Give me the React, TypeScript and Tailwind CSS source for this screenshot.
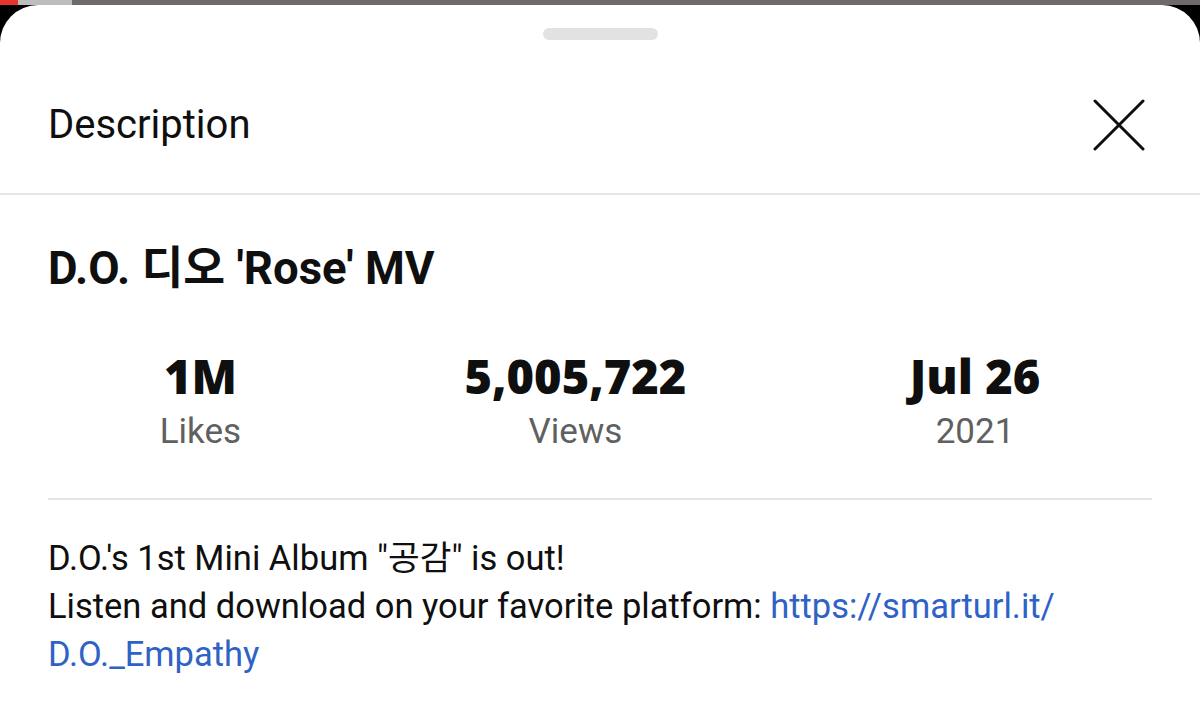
import React from "react";

function Stat({ value, label }: { value: string; label: string }) {
  return (
    <div className="flex flex-col items-center">
      <div className="font-['Open_Sans',sans-serif] font-extrabold text-[47px] leading-[56px] text-[#0f0f0f]">
        {value}
      </div>
      <div className="mt-[8px] font-['Roboto',sans-serif] text-[35px] leading-[40px] text-[#606060]">
        {label}
      </div>
    </div>
  );
}

export default function App() {
  return (
    <div className="w-[1200px] h-[709px] bg-black flex flex-col overflow-hidden font-['Roboto','Noto_Sans_CJK_KR',sans-serif]">
      <div className="h-[5px] flex shrink-0">
        <div className="w-[18px] bg-[#e8342a]" />
        <div className="w-[54px] bg-[#bdbdbd]" />
        <div className="flex-1 bg-[#6f6a6a]" />
      </div>
      <div className="flex-1 bg-white rounded-t-[38px] flex flex-col">
        <div className="flex justify-center pt-[23px]">
          <div className="w-[115px] h-[12px] rounded-full bg-[#e2e2e2]" />
        </div>
        <div className="flex items-center justify-between pl-[48px] pr-[55px] h-[155px] pt-[16px] border-b-2 border-[#e6e6e6]">
          <div className="text-[40px] text-[#0f0f0f] font-['Roboto','Noto_Sans_CJK_KR',sans-serif]">
            Description
          </div>
          <svg width="52" height="52" viewBox="0 0 52 52">
            <path d="M2 2 L50 50 M50 2 L2 50" stroke="#0f0f0f" strokeWidth="3" strokeLinecap="round" />
          </svg>
        </div>
        <div className="px-[48px]">
          <div className="pt-[46px] text-[45.5px] leading-[56px] font-bold text-[#0f0f0f] font-['Roboto','Noto_Sans_CJK_KR',sans-serif]">
            D.O. 디오 'Rose' MV
          </div>
          <div className="flex justify-around pt-[51px] pb-[46px] border-b-2 border-[#e6e6e6]">
            <Stat value="1M" label="Likes" />
            <Stat value="5,005,722" label="Views" />
            <Stat value="Jul 26" label="2021" />
          </div>
          <div className="pt-[34px] text-[34.5px] leading-[48px] text-[#0f0f0f] font-['Roboto','Noto_Sans_CJK_KR',sans-serif]">
            D.O.'s 1st Mini Album "공감" is out!
            <br />
            Listen and download on your favorite platform:{" "}
            <span className="text-[#2f62c6]">
              https://smarturl.it/
              <br />
              D.O._Empathy
            </span>
          </div>
        </div>
      </div>
    </div>
  );
}
